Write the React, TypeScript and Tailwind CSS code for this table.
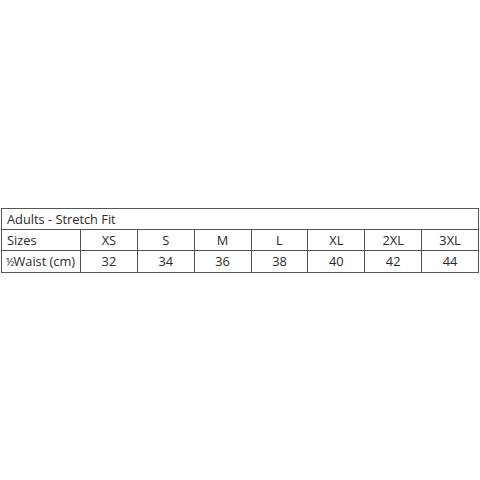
import React from "react";

const sizes = ["XS", "S", "M", "L", "XL", "2XL", "3XL"];
const waist = ["32", "34", "36", "38", "40", "42", "44"];

export default function App() {
  return (
    <div
      className="w-[480px] h-[480px] bg-white flex items-center pl-[1px] text-[#2b2b2b] text-[12.8px]"
      style={{ fontFamily: '"Open Sans", sans-serif' }}
    >
      <table className="table-fixed border-collapse w-[478px]">
        <colgroup>
          <col className="w-[79px]" />
          {sizes.map((s) => (
            <col key={s} />
          ))}
        </colgroup>
        <tbody>
          <tr className="h-[21px]">
            <td colSpan={8} className="border border-[#555] px-[5px] py-0 leading-[20px]">
              Adults - Stretch Fit
            </td>
          </tr>
          <tr className="h-[21px]">
            <td className="border border-[#555] px-[5px] py-0 leading-[20px]">Sizes</td>
            {sizes.map((s) => (
              <td key={s} className="border border-[#555] text-center py-0 leading-[20px]">
                {s}
              </td>
            ))}
          </tr>
          <tr className="h-[22px]">
            <td className="border border-[#555] pl-[4px] pr-0 py-0 leading-[21px] whitespace-nowrap">
              <span className="text-[11px] tracking-[-1px]">½</span>Waist (cm)
            </td>
            {waist.map((w) => (
              <td key={w} className="border border-[#555] text-center py-0 leading-[21px]">
                {w}
              </td>
            ))}
          </tr>
        </tbody>
      </table>
    </div>
  );
}
